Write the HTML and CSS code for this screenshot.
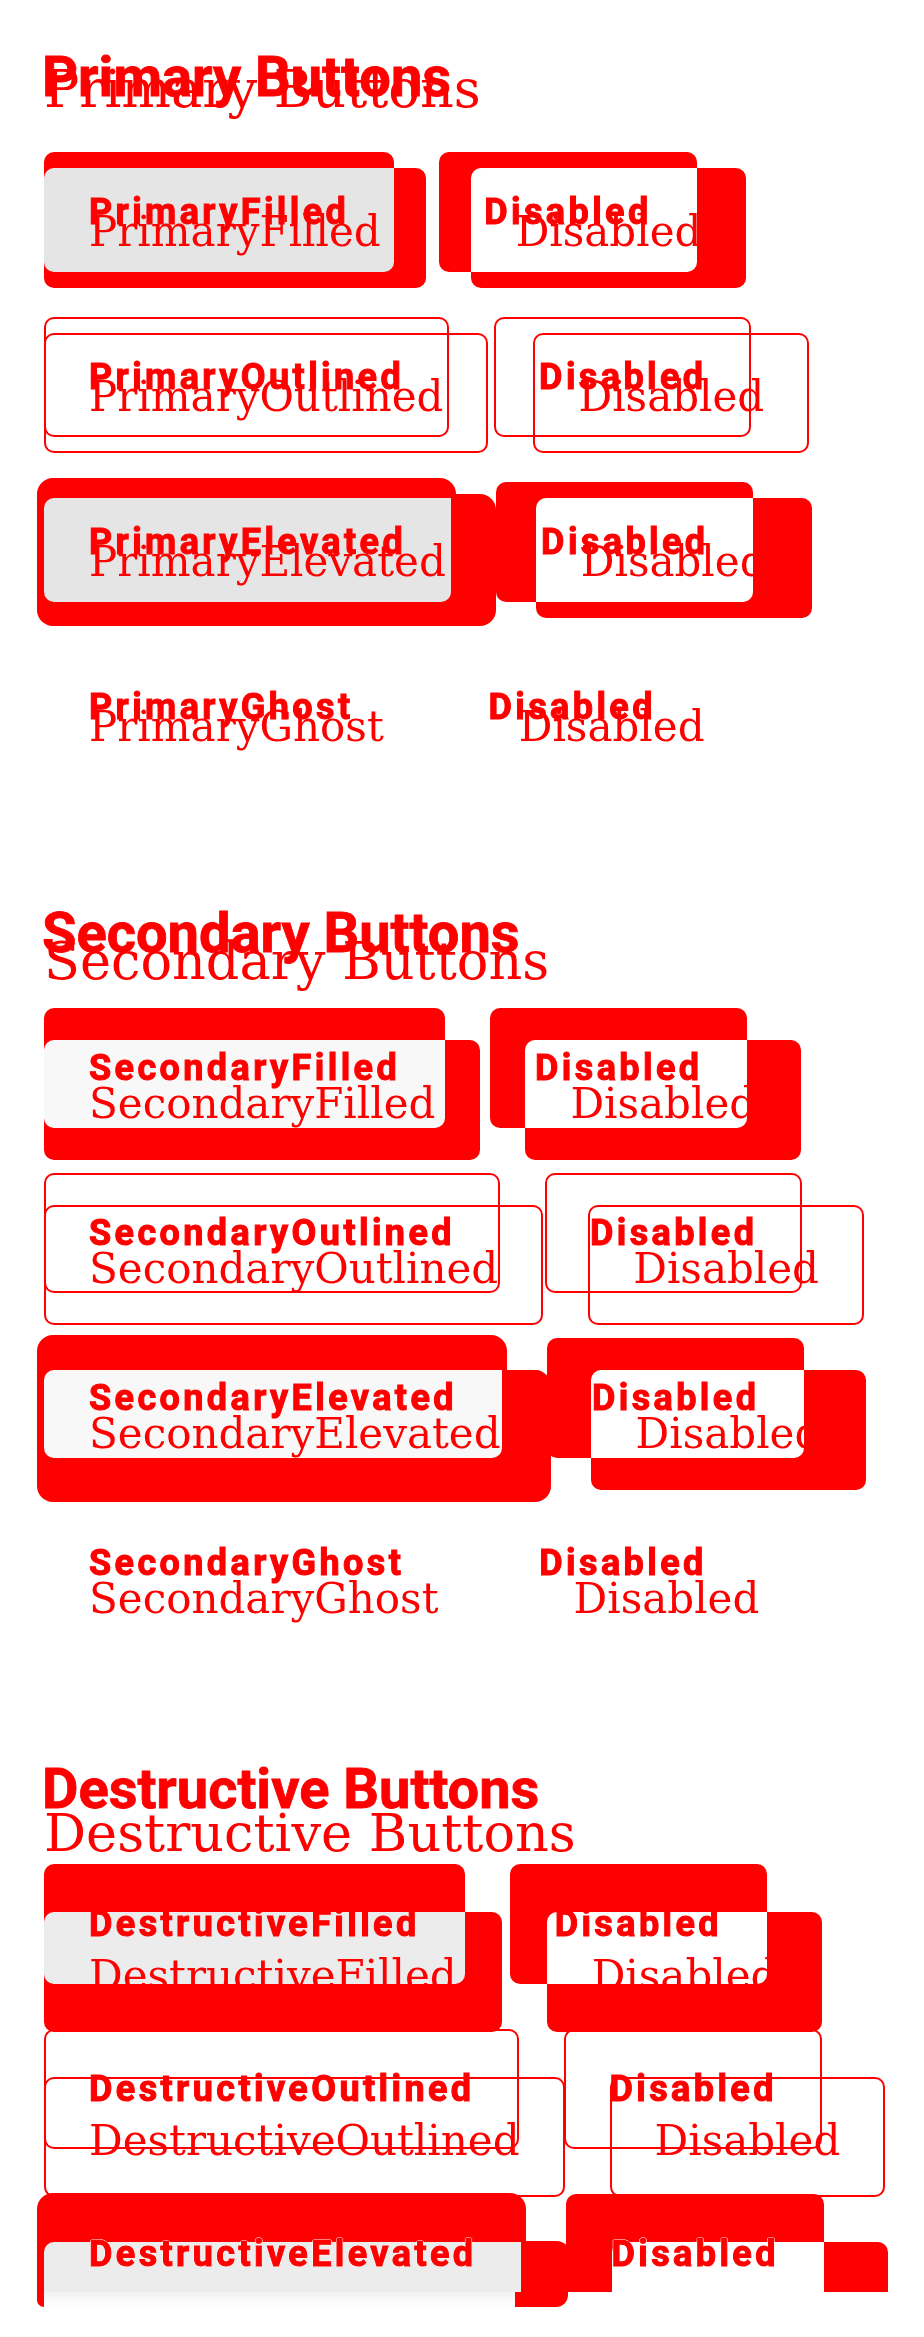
FILE: index.html
```html
<!DOCTYPE html>
<html>
<head>
<meta charset="utf-8">
<link rel="stylesheet" href="styles.css">
</head>
<body>
<div class="page">
  <section class="sec s1">
    <div class="hstack"><h2 class="ha">Primary Buttons</h2><h2 class="hb">Primary Buttons</h2></div>
    <div class="rstack">
      <div class="row ra"><span class="btn filled"><span class="t">PrimaryFilled</span></span><span class="btn dis"><span class="t">Disabled</span></span></div>
      <div class="row rb"><span class="btn filled"><span class="t">PrimaryFilled</span></span><span class="btn dis"><span class="t">Disabled</span></span></div>
    </div>
    <div class="rstack">
      <div class="row ra"><span class="btn out"><span class="t">PrimaryOutlined</span></span><span class="btn out"><span class="t">Disabled</span></span></div>
      <div class="row rb"><span class="btn out"><span class="t">PrimaryOutlined</span></span><span class="btn out"><span class="t">Disabled</span></span></div>
    </div>
    <div class="rstack">
      <div class="row ra"><span class="btn filled elev"><span class="t">PrimaryElevated</span></span><span class="btn dis"><span class="t">Disabled</span></span></div>
      <div class="row rb"><span class="btn filled elev"><span class="t">PrimaryElevated</span></span><span class="btn dis"><span class="t">Disabled</span></span></div>
    </div>
    <div class="rstack">
      <div class="row ra"><span class="btn ghost"><span class="t">PrimaryGhost</span></span><span class="btn ghost"><span class="t">Disabled</span></span></div>
      <div class="row rb"><span class="btn ghost"><span class="t">PrimaryGhost</span></span><span class="btn ghost"><span class="t">Disabled</span></span></div>
    </div>
  </section>

  <section class="sec s2">
    <div class="hstack"><h2 class="ha">Secondary Buttons</h2><h2 class="hb">Secondary Buttons</h2></div>
    <div class="rstack">
      <div class="row ra"><span class="btn filled"><span class="t">SecondaryFilled</span></span><span class="btn dis"><span class="t">Disabled</span></span></div>
      <div class="row rb"><span class="btn filled"><span class="t">SecondaryFilled</span></span><span class="btn dis"><span class="t">Disabled</span></span></div>
    </div>
    <div class="rstack">
      <div class="row ra"><span class="btn out"><span class="t">SecondaryOutlined</span></span><span class="btn out"><span class="t">Disabled</span></span></div>
      <div class="row rb"><span class="btn out"><span class="t">SecondaryOutlined</span></span><span class="btn out"><span class="t">Disabled</span></span></div>
    </div>
    <div class="rstack">
      <div class="row ra"><span class="btn filled elev"><span class="t">SecondaryElevated</span></span><span class="btn dis"><span class="t">Disabled</span></span></div>
      <div class="row rb"><span class="btn filled elev"><span class="t">SecondaryElevated</span></span><span class="btn dis"><span class="t">Disabled</span></span></div>
    </div>
    <div class="rstack">
      <div class="row ra"><span class="btn ghost"><span class="t">SecondaryGhost</span></span><span class="btn ghost"><span class="t">Disabled</span></span></div>
      <div class="row rb"><span class="btn ghost"><span class="t">SecondaryGhost</span></span><span class="btn ghost"><span class="t">Disabled</span></span></div>
    </div>
  </section>

  <section class="sec s3">
    <div class="hstack"><h2 class="ha">Destructive Buttons</h2><h2 class="hb">Destructive Buttons</h2></div>
    <div class="rstack">
      <div class="row ra"><span class="btn filled"><span class="t">DestructiveFilled</span></span><span class="btn dis"><span class="t">Disabled</span></span></div>
      <div class="row rb"><span class="btn filled"><span class="t">DestructiveFilled</span></span><span class="btn dis"><span class="t">Disabled</span></span></div>
    </div>
    <div class="rstack">
      <div class="row ra"><span class="btn out"><span class="t">DestructiveOutlined</span></span><span class="btn out"><span class="t">Disabled</span></span></div>
      <div class="row rb"><span class="btn out"><span class="t">DestructiveOutlined</span></span><span class="btn out"><span class="t">Disabled</span></span></div>
    </div>
    <div class="rstack er">
      <div class="row ra"><span class="btn filled elev"><span class="t">DestructiveElevated</span></span><span class="btn dis"><span class="t">Disabled</span></span></div>
      <div class="row rb"><span class="btn filled elev"><span class="t">DestructiveElevated</span></span><span class="btn dis"><span class="t">Disabled</span></span></div>
    </div>
  </section>
</div>
<div class="tail"><span class="tail-l"></span><span class="tail-m"></span><span class="tail-r"></span></div>
</body>
</html>
```

FILE: styles.css
```css
html, body {
  margin: 0;
  padding: 0;
  background: #fff;
}

.page {
  box-sizing: border-box;
  height: 2292px;
  overflow: hidden;
  padding: 49px 0 0 44px;
  background: #fff;
  isolation: isolate;
}

.sec {
  padding-bottom: 93px;
}

.s1 { --off: 16px; --hoff: 12px; --ov: #e5e5e5; --sa: -1px 2px 0 6px #f00; --sb: -1px 2px 0 6px #f00; }
.s2 { --off: 32px; --hoff: 28px; --ov: #f8f8f8; --sa: -1px 3px 0 6px #f00; --sb: -1px 6px 0 6px #f00; }
.s3 { --off: 48px; --hoff: 44px; --ov: #ececec; --sa: -1px 5px 0 6px #f00; --sb: -1px 5px 0 6px #f00; }

.hstack {
  display: grid;
  align-items: start;
  height: 56px;
  margin-bottom: 47px;
}

.hstack > h2 {
  grid-area: 1 / 1;
  margin: 0;
  line-height: 56px;
  white-space: nowrap;
  color: #f00;
}

.ha {
  font-family: Roboto, sans-serif;
  font-weight: 700;
  font-size: 56px;
  margin-left: -2px !important;
  -webkit-text-stroke: 0.8px #f00;
}

.hb {
  font-family: "DejaVu Serif", serif;
  font-weight: 400;
  font-size: 52.5px;
  margin-top: var(--hoff) !important;
}

.rstack {
  display: grid;
  align-items: start;
  height: 120px;
  margin-bottom: 45px;
}

.row {
  grid-area: 1 / 1;
  display: flex;
  align-items: flex-start;
  gap: 45px;
}

.rb {
  margin-top: var(--off);
}

.btn {
  box-sizing: border-box;
  position: relative;
  display: flex;
  align-items: center;
  height: 120px;
  padding: 0 45px;
  border-radius: 10px;
  white-space: nowrap;
  color: #f00;
}

.ra .btn {
  font-family: Roboto, sans-serif;
  font-weight: 700;
  font-size: 36px;
  letter-spacing: 3.4px;
}

.ra .t {
  -webkit-text-stroke: 1px #f00;
}

.rb .btn {
  font-family: "DejaVu Serif", serif;
  font-weight: 400;
  font-size: 42px;
  padding-top: 6px;
}

.t {
  position: relative;
  z-index: 2;
}

.er .ra .t {
  text-shadow: 1px 0 0 #fff, -1px 0 0 #fff, 0 1px 0 #fff, 0 -1px 0 #fff;
}

.er .rb .t {
  visibility: hidden;
}

.filled {
  background: #f00;
}

.ra .filled::after {
  content: "";
  position: absolute;
  left: 0;
  right: 0;
  bottom: 0;
  top: var(--off);
  background: var(--ov);
  border-radius: 10px 0 10px 10px;
  z-index: 1;
}

.ra .elev {
  box-shadow: var(--sa);
}

.rb .elev {
  box-shadow: var(--sb);
}

.ra .dis {
  background: #f00;
}

.rb .dis::before {
  content: "";
  position: absolute;
  left: 0;
  top: 0;
  right: 0;
  bottom: 0;
  border-radius: 10px;
  background: #0ff;
  mix-blend-mode: difference;
}

.out {
  border: 2px solid #f00;
  padding: 0 43px;
}

.rb .out {
  padding-top: 6px;
}

.tail {
  display: flex;
  height: 15px;
  padding-left: 37px;
}

.tail-l {
  width: 7px;
  background: #f00;
  border-bottom-left-radius: 8px;
}

.tail-m {
  width: 471px;
  background: linear-gradient(#f2f2f2, #fff);
}

.tail-r {
  width: 53px;
  background: #f00;
  border-bottom-right-radius: 12px;
}
```
